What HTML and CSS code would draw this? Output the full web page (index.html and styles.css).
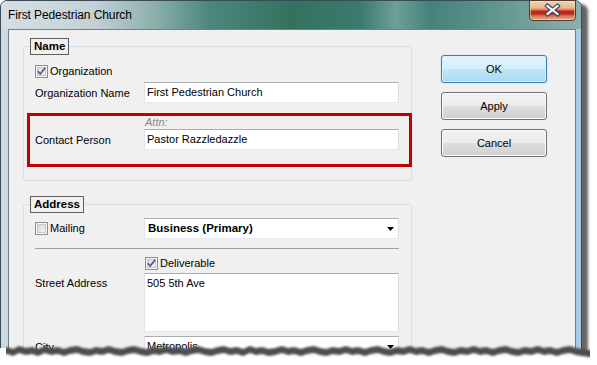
FILE: index.html
```html
<!DOCTYPE html>
<html>
<head>
<meta charset="utf-8">
<link rel="stylesheet" href="styles.css">
</head>
<body>
<div class="stage">
  <div class="window">
    <div class="titlebar">
      <span class="title">First Pedestrian Church</span>
      <div class="close">
        <svg width="47" height="20" viewBox="0 0 47 20">
          <path d="M18.5 6 L28.5 14 M28.5 6 L18.5 14" stroke="#2f3c5a" stroke-width="4.4" stroke-linecap="square" fill="none"/>
          <path d="M18.5 6 L28.5 14 M28.5 6 L18.5 14" stroke="#ffffff" stroke-width="2.2" stroke-linecap="square" fill="none"/>
        </svg>
      </div>
    </div>
    <div class="body">
      <div class="client">
        <div class="groups">
          <fieldset class="group group-name">
            <legend>Name</legend>
            <div class="check-row">
              <span class="cb"><svg width="11" height="11" viewBox="0 0 11 11"><path d="M1.8 5.2 L4.2 8 L9.2 1.8" fill="none" stroke="#4b5b82" stroke-width="1.7"/></svg></span>
              <span>Organization</span>
            </div>
            <div class="row">
              <span class="label">Organization Name</span>
              <div class="input">First Pedestrian Church</div>
            </div>
            <div class="highlight">
              <div class="attn">Attn:</div>
              <div class="row tight">
                <span class="label">Contact Person</span>
                <div class="input">Pastor Razzledazzle</div>
              </div>
            </div>
          </fieldset>
          <fieldset class="group group-address">
            <legend>Address</legend>
            <div class="row tight">
              <span class="label"><span class="check-row"><span class="cb"></span><span>Mailing</span></span></span>
              <div class="input combo"><b>Business (Primary)</b><svg class="arrow" width="7" height="4" viewBox="0 0 7 4"><polygon points="0,0 7,0 3.5,4" fill="#000"/></svg></div>
            </div>
            <hr class="sep">
            <div class="check-row deliverable">
              <span class="cb"><svg width="11" height="11" viewBox="0 0 11 11"><path d="M1.8 5.2 L4.2 8 L9.2 1.8" fill="none" stroke="#4b5b82" stroke-width="1.7"/></svg></span>
              <span>Deliverable</span>
            </div>
            <div class="row top">
              <span class="label street">Street Address</span>
              <div class="input textarea">505 5th Ave</div>
            </div>
            <div class="row">
              <span class="label">City</span>
              <div class="input combo plain"><span>Metropolis</span><svg class="arrow" width="7" height="4" viewBox="0 0 7 4"><polygon points="0,0 7,0 3.5,4" fill="#000"/></svg></div>
            </div>
          </fieldset>
        </div>
        <div class="buttons">
          <button class="btn default">OK</button>
          <button class="btn">Apply</button>
          <button class="btn">Cancel</button>
        </div>
      </div>
    </div>
  </div>
  <svg class="tear" width="597" height="40" viewBox="0 325 597 40">
    <defs>
      <filter id="blur" x="-5%" y="-60%" width="110%" height="220%"><feGaussianBlur stdDeviation="1.2"/></filter>
      <clipPath id="band"><rect x="6" y="325" width="584" height="40"/></clipPath>
      <polygon id="tp" points="0,365 0,348 7,347 13,349 19,346 26,348 32,347 38,349 45,346 51,348 58,347 64,349 70,347 77,346 83,348 90,349 96,347 102,348 109,346 115,348 122,349 128,347 134,346 141,348 147,349 154,347 160,348 166,346 173,348 179,347 186,349 192,347 198,346 205,348 211,349 218,347 224,346 230,348 237,347 243,349 250,346 256,348 262,347 269,349 275,348 282,346 288,348 294,347 301,349 307,347 314,346 320,348 326,349 333,347 339,348 346,346 352,348 358,347 365,349 371,347 378,346 384,348 390,349 397,347 403,348 410,346 416,348 422,347 429,349 435,347 442,346 448,348 454,349 461,347 467,348 474,346 480,348 486,347 493,349 499,347 506,346 512,348 518,349 525,347 531,348 538,346 544,348 550,347 557,349 563,347 570,346 576,348 582,349 589,350 597,351 597,365"/>
    </defs>
    <rect x="0" y="348" width="7" height="17" fill="#fff"/>
    <g clip-path="url(#band)"><use href="#tp" fill="#4e4e4e" filter="url(#blur)"/></g>
    <use href="#tp" transform="translate(0,7)" fill="#ffffff" filter="url(#blur)"/>
    <rect x="0" y="359" width="597" height="6" fill="#fff"/>
  </svg>
</div>
</body>
</html>
```
FILE: styles.css
```css
body {
  margin: 0;
  background: #ffffff;
  font-family: "Liberation Sans", Arial, sans-serif;
  font-size: 11px;
  color: #000;
}

.stage {
  position: relative;
  width: 597px;
  height: 365px;
  overflow: hidden;
  background: #fff;
}

.window {
  width: 582px;
  height: 430px;
  box-sizing: border-box;
  border: 1px solid #3b4a57;
  border-radius: 7px 7px 0 0;
  background: #b4cbdc linear-gradient(90deg, #cbd9e2 0%, #b9ccd8 30%, #aec8dc 70%, #a8cbe8 100%);
  box-shadow: 6px 4px 3px rgba(35, 35, 35, 0.7);
  display: flex;
  flex-direction: column;
}

.titlebar {
  height: 28px;
  flex: none;
  display: flex;
  justify-content: space-between;
  align-items: flex-start;
  border-radius: 6px 6px 0 0;
  background: #3f7c72 linear-gradient(90deg, #d6dfe3 0%, #c3d1d6 16%, #8fb1ae 26%, #4b877c 36%, #34725f 50%, #3b7a6e 62%, #6d9f97 68%, #44827a 74%, #629790 86%, #8bb0ab 100%);
}

.title {
  padding: 7px 0 0 7px;
  font-size: 12px;
  line-height: 15px;
  letter-spacing: -0.1px;
  color: #000;
}

.close {
  width: 47px;
  height: 21px;
  margin: -1px 5px 0 0;
  box-sizing: border-box;
  border: 1px solid #5a3a2c;
  border-radius: 0 0 4px 4px;
  background: linear-gradient(180deg, #efd5b4 0%, #e6bb90 35%, #d88a62 45%, #c42c1c 52%, #bb2516 66%, #d47a5e 80%, #e6ad8c 100%);
  box-shadow: inset 0 0 0 1px rgba(255, 230, 200, 0.5);
}

.close svg {
  display: block;
  margin: -1px 0 0 -1px;
}

.body {
  flex: 1;
  display: flex;
  padding: 0 5px 0 7px;
}

.client {
  flex: 1;
  display: flex;
  align-items: flex-start;
  border: 1px solid #6f808f;
  border-bottom: none;
  background: #f0f0f0;
  padding: 8px 0 0 14px;
}

.groups {
  width: 389px;
  flex: none;
  display: flex;
  flex-direction: column;
}

.group {
  margin: 0;
  min-width: 0;
  border: 1px solid #d5dfe5;
  border-radius: 3px;
  padding: 10px 12px 13px 11px;
}

.group-address {
  margin-top: 15px;
  padding-top: 5px;
  padding-bottom: 30px;
}

.group legend {
  margin-left: -5px;
  padding: 0 3px;
  border: 1px solid #5e5e5e;
  background: #f0f0f0;
  font-weight: bold;
  font-size: 11.5px;
  line-height: 15px;
}

.check-row {
  display: flex;
  align-items: center;
  gap: 2px;
  height: 13px;
  line-height: 13px;
}

.cb {
  width: 13px;
  height: 13px;
  flex: none;
  box-sizing: border-box;
  border: 1px solid #8e8f8f;
  background: linear-gradient(135deg, #cdd2d8 0%, #e6e9ec 55%, #f7f7f7 100%);
  box-shadow: inset 0 0 0 1px #f6f6f6, inset 0 0 0 2px #c3c9d0;
}

.cb svg {
  display: block;
}

.row {
  display: flex;
  align-items: center;
  margin-top: 4px;
}

.row.tight {
  margin-top: 0;
}

.row.top {
  align-items: flex-start;
  margin-top: 3px;
}

.label {
  width: 109px;
  flex: none;
}

.label.street {
  margin-top: 4px;
  line-height: 13px;
}

.input {
  flex: 1;
  height: 21px;
  box-sizing: border-box;
  border: 1px solid;
  border-color: #abadb3 #dbdfe6 #e3e9ef #e2e3ea;
  background: #fff;
  padding: 0 2px;
  line-height: 19px;
  white-space: nowrap;
}

.textarea {
  height: 59px;
}

.combo {
  display: flex;
  align-items: center;
  justify-content: space-between;
  padding: 0 4px 0 3px;
}

.combo b {
  font-size: 11.5px;
}

.combo.plain {
  padding-left: 2px;
}

.arrow {
  display: block;
  flex: none;
}

.highlight {
  margin: 10px -13px 0 -8px;
  border: 3px solid #c20000;
  padding: 0 10px 14px 5px;
}

.attn {
  margin-left: 110px;
  line-height: 13px;
  font-style: italic;
  color: #8a8a8a;
}

.sep {
  height: 0;
  margin: 9px 0 0;
  border: 0;
  border-top: 1px solid #a0a0a0;
}

.deliverable {
  margin: 8px 0 0 110px;
}

.buttons {
  margin: 17px 0 0 29px;
  display: flex;
  flex-direction: column;
  gap: 9px;
}

.btn {
  width: 106px;
  height: 28px;
  box-sizing: border-box;
  border: 1px solid #707070;
  border-radius: 3px;
  background: linear-gradient(180deg, #f3f3f3 0%, #ebebeb 48%, #dddddd 52%, #d0d0d0 100%);
  box-shadow: inset 0 0 0 1px #fbfbfb;
  font-family: "Liberation Sans", Arial, sans-serif;
  font-size: 11px;
  color: #000;
  padding: 0;
}

.btn.default {
  border-color: #3c7fb1;
  background: linear-gradient(180deg, #e5f4fc 0%, #d4eefb 48%, #bfe5f9 52%, #aad9f3 100%);
  box-shadow: inset 0 0 0 1px #d8f1fd, 0 0 1px #5ab0e6;
}

.tear {
  position: absolute;
  left: 0;
  top: 325px;
  pointer-events: none;
}
```
